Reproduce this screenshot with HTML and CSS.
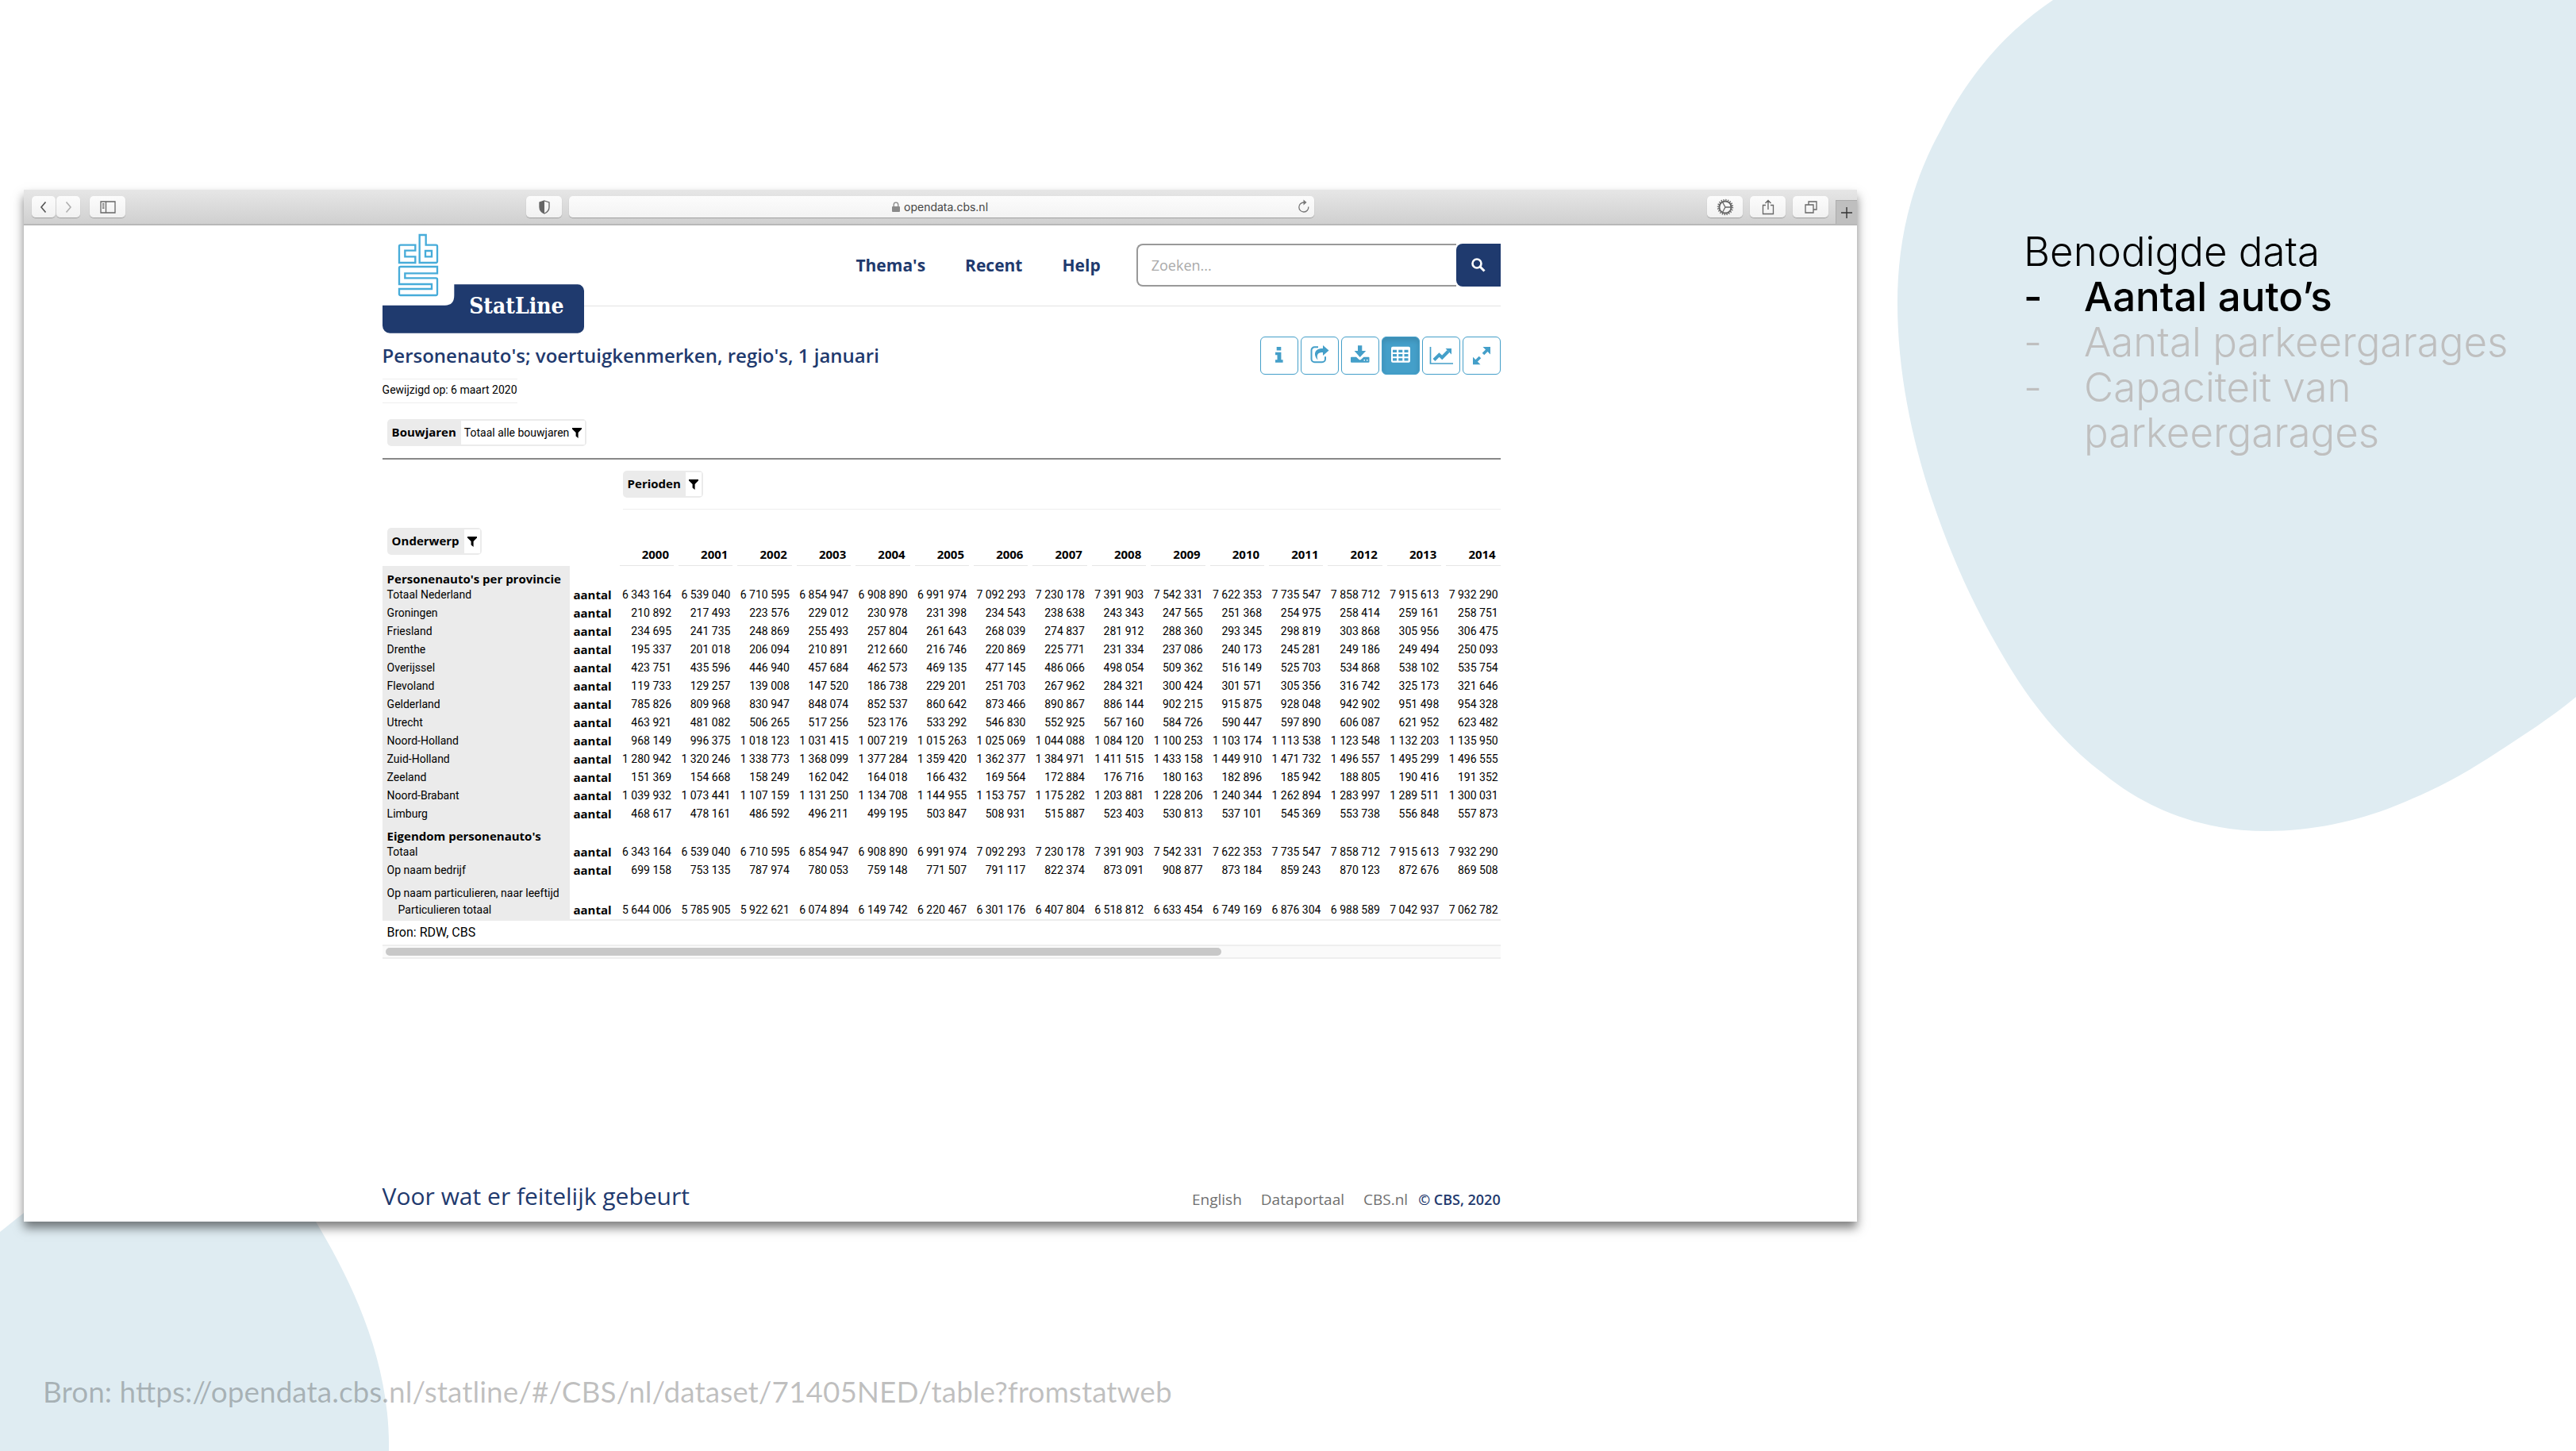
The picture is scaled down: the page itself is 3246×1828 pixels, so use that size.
FILE: index.html
```html
<!DOCTYPE html>
<html lang="nl">
<head>
<meta charset="utf-8">
<meta name="viewport" content="width=device-width, initial-scale=1">
<title>Benodigde data</title>
<link rel="stylesheet" href="styles.css">
</head>
<body>
<div class="slide">
  <svg class="blob blob-right" viewBox="0 0 856 1050" aria-hidden="true"><path d="M197 0C134 42 88 100 57 161C15 236 1 310 1 382C1 460 16 545 45 631C70 705 100 770 139 835C175 895 215 940 261 975C320 1023 390 1047 466 1047C530 1047 590 1032 641 1010C685 992 720 972 758 947C790 926 822 906 856 878V0Z"/></svg>
  <svg class="blob blob-left" viewBox="0 0 492 328" aria-hidden="true"><path d="M0 52C10 44 20 36 30 28C100 -10 320 -20 390 25L398 39C440 110 492 210 490 328H0Z"/></svg>

  <div class="stage">
    <section class="browser" aria-label="Browservenster">
      <div class="chrome">
        <div class="chrome-left">
          <div class="pair">
            <button class="key narrow" aria-label="Vorige"><svg width="16" height="18" viewBox="0 0 16 18"><path d="M10.500 2.500L5 9l5.500 6.500" fill="none" stroke="#555" stroke-width="1.600"/></svg></button>
            <button class="key narrow" aria-label="Volgende"><svg width="16" height="18" viewBox="0 0 16 18"><path d="M5.500 2.500L11 9l-5.500 6.500" fill="none" stroke="#b0b0b0" stroke-width="1.600"/></svg></button>
          </div>
          <button class="key" aria-label="Zijbalk"><svg width="20" height="16" viewBox="0 0 20 16"><path d="M1 1h18v14H1zM7.500 1v14M3 4h2.500M3 6.500h2.500M3 9h2.500" fill="none" stroke="#666" stroke-width="1.300"/></svg></button>
        </div>
        <div class="chrome-mid">
          <button class="key" aria-label="Privacyrapport"><svg width="16" height="18" viewBox="0 0 16 18"><path d="M8 1l6 2v6c0 4-2.500 6.500-6 8c-3.500-1.500-6-4-6-8V3z" fill="none" stroke="#666" stroke-width="1.300"/><path d="M8 1L2 3v6c0 4 2.500 6.500 6 8z" fill="#666"/></svg></button>
          <div class="address">
            <svg width="10" height="14" viewBox="0 0 10 14"><rect y="6" width="10" height="7" rx="1" fill="#8a8a8a"/><path d="M2.200 6V4a2.800 2.800 0 0 1 5.600 0v2" fill="none" stroke="#8a8a8a" stroke-width="1.300"/></svg>
            <input class="address-text" type="text" value="opendata.cbs.nl" aria-label="Adres">
            <button class="reload" aria-label="Vernieuwen"><svg width="16" height="18" viewBox="0 0 16 18"><path d="M13.800 9.500A6 6 0 1 1 8 4" fill="none" stroke="#777" stroke-width="1.300"/><path d="M7.500 .5L11.500 4L7.500 7.500z" fill="#777"/></svg></button>
          </div>
        </div>
        <div class="chrome-right">
          <button class="key" aria-label="Instellingen"><svg width="22" height="22" viewBox="0 0 22 22" fill="none" stroke="#666"><circle cx="11" cy="11" r="9.200" stroke-width="2" stroke-dasharray="1.300 1.590"/><circle cx="11" cy="11" r="7.600" stroke-width="2"/><path d="M11 11h7.500M11 11L7.500 4.500M11 11L7.500 17.500" stroke-width="1.300"/></svg></button>
          <button class="key" aria-label="Delen"><svg width="16" height="20" viewBox="0 0 16 20" fill="none" stroke="#666" stroke-width="1.300"><path d="M5 7.500H1.500v11h13v-11H11M8 13V1.500M4.500 5L8 1.500L11.500 5"/></svg></button>
          <button class="key" aria-label="Tabbladen"><svg width="16" height="16" viewBox="0 0 16 16" fill="none" stroke="#666" stroke-width="1.300"><path d="M1 5h10v10H1zM5 5V1h10v10h-4"/></svg></button>
          <button class="new-tab" aria-label="Nieuw tabblad"><svg width="14" height="14" viewBox="0 0 14 14"><path d="M7 0v14M0 7h14" stroke="#333" stroke-width="1.400"/></svg></button>
        </div>
      </div>

      <div class="site">
        <header class="site-head">
          <a class="brand" href="#" aria-label="CBS StatLine">
            <svg class="brand-mark" width="254" height="126" viewBox="36 42 762 378">
              <path fill="#1f3a6e" d="M307 235H774a24 24 0 0 1 24 24V395a24 24 0 0 1-24 24H64a28 28 0 0 1-28-28V314H272q35 0 35-38z"/>
              <g fill="none" stroke="#47acd9" stroke-width="7"><path d="M160 86H104q-5 0-5 5V153H160V130H121V107H160z"/><path d="M176 48H200V86H238q5 0 5 5V148q0 5-5 5H176z"/><path d="M198 108H222V130H198z"/><path d="M104 168H243V193H121V211H238q5 0 5 5V271q0 5-5 5H104q-5 0-5-5V252H222V234H99V173q0-5 5-5z"/></g>
            </svg>
            <span class="brand-name">StatLine</span>
          </a>
          <nav class="nav"><a href="#">Thema's</a><a href="#">Recent</a><a href="#">Help</a></nav>
          <form class="search">
            <input class="search-box" type="search" placeholder="Zoeken..." aria-label="Zoeken">
            <button class="search-go" type="button" aria-label="Zoek"><svg width="20" height="20" viewBox="0 0 20 20"><circle cx="8" cy="8" r="5.500" fill="none" stroke="#fff" stroke-width="2.600"/><path d="M12 12l5.500 5.500" stroke="#fff" stroke-width="3"/></svg></button>
          </form>
        </header>

        <div class="title-row">
          <h1 class="title">Personenauto's; voertuigkenmerken, regio's, 1 januari</h1>
          <div class="tools">
            <button class="tool" aria-label="Informatie"><svg viewBox="0 0 48 48"><path d="M20.700 13h5.600v4.600h-5.600zM19 19.700h7.400v9.500h2.200v3.500H19v-3.500h2.500v-6H19z"/></svg></button>
            <button class="tool" aria-label="Delen"><svg viewBox="0 0 48 48"><path d="M22 13.300h-4.500a4 4 0 0 0-4 4v11a4 4 0 0 0 4 4h9.500a4 4 0 0 0 4-4v-3" fill="none" stroke="#449fc9" stroke-width="2"/><path d="M28 11l7.500 6.500l-7.500 6.500v-4c-6 0-8.500 2-6.500 9.500c-6-6.500-4.500-14.500 6.500-14.500z"/></svg></button>
            <button class="tool" aria-label="Downloaden"><svg viewBox="0 0 48 48"><path d="M21 11.300h5.300V18h4.900L23.700 26L16.600 18H21z"/><path fill-rule="evenodd" d="M13 25.700h6l3.500 3.400q1.200.9 2.400 0l3.500-3.400H34.500q1 0 1 1V31.700q0 1-1 1H13q-1 0-1-1v-5q0-1 1-1zM28.500 29v1.500H30V29zM32 29v1.500h1.500V29z"/></svg></button>
            <button class="tool active" aria-label="Tabel" aria-pressed="true"><svg viewBox="0 0 48 48"><path fill-rule="evenodd" d="M14 12.700h20q2 0 2 2v16q0 2-2 2H14q-2 0-2-2v-16q0-2 2-2zM14 16.700v3.200h5v-3.200zM21.300 16.700v3.200h5v-3.200zM28.500 16.700v3.200h5v-3.200zM14 22v3.200h5V22zM21.300 22v3.200h5V22zM28.500 22v3.200h5V22zM14 27.300v3.200h5v-3.200zM21.300 27.300v3.200h5v-3.200zM28.500 27.300v3.200h5v-3.200z"/></svg></button>
            <button class="tool" aria-label="Grafiek"><svg viewBox="0 0 48 48"><path d="M10.500 13v21h28.500" fill="none" stroke="#449fc9" stroke-width="1.700"/><path d="M15 29.500l6.500-6.500l3.700 3.500L33 18.500" fill="none" stroke="#449fc9" stroke-width="4"/><path d="M29.500 15h7.500v7.500z"/></svg></button>
            <button class="tool" aria-label="Volledig scherm"><svg viewBox="0 0 48 48"><path d="M25.500 13H35v9.500zM13 35.300V25.800l9.500 9.500z"/><path d="M31 17l-5 5M22 26l-5 5" fill="none" stroke="#449fc9" stroke-width="3.600"/></svg></button>
          </div>
        </div>
        <p class="changed">Gewijzigd op: 6 maart 2020</p>

        <div class="filters">
          <button class="facet"><b>Bouwjaren</b><span class="value">Totaal alle bouwjaren <svg width="12" height="13" viewBox="0 0 12 13"><path d="M0 0h12v1.500L7.600 6v7L4.600 10.500V6L0 1.500z"/></svg></span></button>
        </div>

        <table class="data">
          <colgroup><col class="c-label"><col class="c-unit"><col span="15"></colgroup>
          <thead>
            <tr class="facet-row"><td colspan="2"></td><td colspan="15"><div><button class="facet"><b>Perioden</b><span><svg width="12" height="13" viewBox="0 0 12 13"><path d="M0 0h12v1.500L7.600 6v7L4.600 10.500V6L0 1.500z"/></svg></span></button></div></td></tr>
            <tr class="years"><td colspan="2"><button class="facet"><b>Onderwerp</b><span><svg width="12" height="13" viewBox="0 0 12 13"><path d="M0 0h12v1.500L7.600 6v7L4.600 10.500V6L0 1.500z"/></svg></span></button></td><th><i>2000</i><th><i>2001</i><th><i>2002</i><th><i>2003</i><th><i>2004</i><th><i>2005</i><th><i>2006</i><th><i>2007</i><th><i>2008</i><th><i>2009</i><th><i>2010</i><th><i>2011</i><th><i>2012</i><th><i>2013</i><th><i>2014</i></tr>
          </thead>
          <tbody>
            <tr class="group"><th>Personenauto's per provincie<td colspan="16"></tr>
            <tr><th>Totaal Nederland<td>aantal<td>6 343 164<td>6 539 040<td>6 710 595<td>6 854 947<td>6 908 890<td>6 991 974<td>7 092 293<td>7 230 178<td>7 391 903<td>7 542 331<td>7 622 353<td>7 735 547<td>7 858 712<td>7 915 613<td>7 932 290</tr>
            <tr><th>Groningen<td>aantal<td>210 892<td>217 493<td>223 576<td>229 012<td>230 978<td>231 398<td>234 543<td>238 638<td>243 343<td>247 565<td>251 368<td>254 975<td>258 414<td>259 161<td>258 751</tr>
            <tr><th>Friesland<td>aantal<td>234 695<td>241 735<td>248 869<td>255 493<td>257 804<td>261 643<td>268 039<td>274 837<td>281 912<td>288 360<td>293 345<td>298 819<td>303 868<td>305 956<td>306 475</tr>
            <tr><th>Drenthe<td>aantal<td>195 337<td>201 018<td>206 094<td>210 891<td>212 660<td>216 746<td>220 869<td>225 771<td>231 334<td>237 086<td>240 173<td>245 281<td>249 186<td>249 494<td>250 093</tr>
            <tr><th>Overijssel<td>aantal<td>423 751<td>435 596<td>446 940<td>457 684<td>462 573<td>469 135<td>477 145<td>486 066<td>498 054<td>509 362<td>516 149<td>525 703<td>534 868<td>538 102<td>535 754</tr>
            <tr><th>Flevoland<td>aantal<td>119 733<td>129 257<td>139 008<td>147 520<td>186 738<td>229 201<td>251 703<td>267 962<td>284 321<td>300 424<td>301 571<td>305 356<td>316 742<td>325 173<td>321 646</tr>
            <tr><th>Gelderland<td>aantal<td>785 826<td>809 968<td>830 947<td>848 074<td>852 537<td>860 642<td>873 466<td>890 867<td>886 144<td>902 215<td>915 875<td>928 048<td>942 902<td>951 498<td>954 328</tr>
            <tr><th>Utrecht<td>aantal<td>463 921<td>481 082<td>506 265<td>517 256<td>523 176<td>533 292<td>546 830<td>552 925<td>567 160<td>584 726<td>590 447<td>597 890<td>606 087<td>621 952<td>623 482</tr>
            <tr><th>Noord-Holland<td>aantal<td>968 149<td>996 375<td>1 018 123<td>1 031 415<td>1 007 219<td>1 015 263<td>1 025 069<td>1 044 088<td>1 084 120<td>1 100 253<td>1 103 174<td>1 113 538<td>1 123 548<td>1 132 203<td>1 135 950</tr>
            <tr><th>Zuid-Holland<td>aantal<td>1 280 942<td>1 320 246<td>1 338 773<td>1 368 099<td>1 377 284<td>1 359 420<td>1 362 377<td>1 384 971<td>1 411 515<td>1 433 158<td>1 449 910<td>1 471 732<td>1 496 557<td>1 495 299<td>1 496 555</tr>
            <tr><th>Zeeland<td>aantal<td>151 369<td>154 668<td>158 249<td>162 042<td>164 018<td>166 432<td>169 564<td>172 884<td>176 716<td>180 163<td>182 896<td>185 942<td>188 805<td>190 416<td>191 352</tr>
            <tr><th>Noord-Brabant<td>aantal<td>1 039 932<td>1 073 441<td>1 107 159<td>1 131 250<td>1 134 708<td>1 144 955<td>1 153 757<td>1 175 282<td>1 203 881<td>1 228 206<td>1 240 344<td>1 262 894<td>1 283 997<td>1 289 511<td>1 300 031</tr>
            <tr><th>Limburg<td>aantal<td>468 617<td>478 161<td>486 592<td>496 211<td>499 195<td>503 847<td>508 931<td>515 887<td>523 403<td>530 813<td>537 101<td>545 369<td>553 738<td>556 848<td>557 873</tr>
            <tr class="group"><th>Eigendom personenauto's<td colspan="16"></tr>
            <tr><th>Totaal<td>aantal<td>6 343 164<td>6 539 040<td>6 710 595<td>6 854 947<td>6 908 890<td>6 991 974<td>7 092 293<td>7 230 178<td>7 391 903<td>7 542 331<td>7 622 353<td>7 735 547<td>7 858 712<td>7 915 613<td>7 932 290</tr>
            <tr><th>Op naam bedrijf<td>aantal<td>699 158<td>753 135<td>787 974<td>780 053<td>759 148<td>771 507<td>791 117<td>822 374<td>873 091<td>908 877<td>873 184<td>859 243<td>870 123<td>872 676<td>869 508</tr>
            <tr class="group light"><th>Op naam particulieren, naar leeftijd<td colspan="16"></tr>
            <tr class="sub"><th>Particulieren totaal<td>aantal<td>5 644 006<td>5 785 905<td>5 922 621<td>6 074 894<td>6 149 742<td>6 220 467<td>6 301 176<td>6 407 804<td>6 518 812<td>6 633 454<td>6 749 169<td>6 876 304<td>6 988 589<td>7 042 937<td>7 062 782</tr>
          </tbody>
          <tfoot><tr><td colspan="17">Bron: RDW, CBS</td></tr></tfoot>
        </table>
        <div class="scroll"><div class="thumb"></div></div>

        <footer class="site-foot">
          <p class="slogan">Voor wat er feitelijk gebeurt</p>
          <nav class="foot-nav"><a href="#">English</a><a href="#">Dataportaal</a><a href="#">CBS.nl</a></nav>
          <p class="copyright">© CBS, 2020</p>
        </footer>
      </div>
    </section>

    <aside class="notes">
      <h2>Benodigde data</h2>
      <ul>
        <li class="current">Aantal auto’s</li>
        <li>Aantal parkeergarages</li>
        <li>Capaciteit van parkeergarages</li>
      </ul>
    </aside>
  </div>

  <p class="source">Bron: https://opendata.cbs.nl/statline/#/CBS/nl/dataset/71405NED/table?fromstatweb</p>
</div>
</body>
</html>
```

FILE: styles.css
```css
* { box-sizing: border-box; }
body { margin: 0; background: #fff; color: #000; }
h1, h2, p, ul { margin: 0; padding: 0; font-size: inherit; font-weight: inherit; }
ul { list-style: none; }
a { color: inherit; text-decoration: none; }
button, input { font: inherit; color: inherit; margin: 0; padding: 0; border: 0; background: none; }
svg { display: block; flex: none; }

.slide {
  position: relative;
  display: flex;
  flex-direction: column;
  min-height: 100vh;
  padding: 239px 0 47px 30px;
  overflow: hidden;
}
.blob { position: absolute; fill: #dfecf2; }
.blob-right { top: 0; right: 0; width: 856px; }
.blob-left { bottom: 0; left: 0; width: 492px; }

.stage { position: relative; display: grid; grid-template-columns: 2310fr 906fr; }

/* Browser window */
.browser {
  display: flex;
  flex-direction: column;
  min-width: 0;
  min-height: 71.1vh;
  background: #fff;
  box-shadow: 0 8px 12px rgba(0, 0, 0, .5);
}
.chrome {
  display: grid;
  grid-template-columns: 633fr 993fr 684fr;
  height: 45px;
  border-bottom: 2px solid #b8b8b8;
  background: linear-gradient(#e6e6e6, #d0d0d0);
}
.chrome-left, .chrome-mid, .chrome-right { display: flex; padding-top: 8px; min-width: 0; }
.chrome-left { gap: 12px; padding-left: 10px; }
.chrome-mid { gap: 9px; }
.chrome-right { gap: 9px; justify-content: flex-end; }
.pair { display: flex; gap: 1px; }
.key {
  display: flex;
  align-items: center;
  justify-content: center;
  width: 45px;
  height: 27px;
  border-radius: 5px;
  background: linear-gradient(#fcfcfc, #f1f1f1);
  box-shadow: 0 1px 1px rgba(0, 0, 0, .25);
}
.key.narrow { width: 30px; }
.address {
  flex: 1;
  display: flex;
  align-items: center;
  justify-content: center;
  gap: 5px;
  height: 27px;
  position: relative;
  border-radius: 5px;
  background: linear-gradient(#fcfcfc, #f3f3f3);
  box-shadow: 0 1px 1px rgba(0, 0, 0, .25);
}
.address-text { width: 110px; font: 14px/20px Inter, sans-serif; color: #444; }
.reload { position: absolute; right: 5px; top: 4px; }
.new-tab {
  display: flex;
  align-items: center;
  justify-content: center;
  width: 27px;
  height: 30px;
  margin-top: 5px;
  border: 1px solid #adadad;
  border-width: 1px 0 0 1px;
  background: #bfbfbf;
}

/* Website */
.site {
  flex: 1;
  display: flex;
  flex-direction: column;
  width: 61%;
  margin-left: 19.55%;
  font: 15px/17px "Open Sans", "Noto Sans", sans-serif;
}
.site-head {
  position: relative;
  display: flex;
  align-items: center;
  justify-content: flex-end;
  gap: 45px;
  padding: 23px 0 24px;
  border-bottom: 1px solid #e3e3e3;
}
.brand { position: absolute; left: 0; top: 10px; }
.brand-name {
  position: absolute;
  right: 25px;
  bottom: 18px;
  color: #fff;
  font: bold 28px/32px "DejaVu Serif Condensed", "DejaVu Serif", serif;
}
.nav { display: flex; gap: 50px; font-size: 21px; line-height: 28px; font-weight: 700; color: #1f3a6e; }
.search { display: flex; width: 459px; height: 54px; }
.search-box {
  flex: 1;
  min-width: 0;
  padding-left: 17px;
  border: 2px solid #999;
  border-right: 0;
  border-radius: 8px 0 0 8px;
  font-size: 18px;
}
.search-box::placeholder { color: #aaa; opacity: 1; }
.search-go {
  display: flex;
  align-items: center;
  justify-content: center;
  width: 56px;
  border-radius: 8px 0 0 8px;
  background: #1f3a6e;
}

.title-row { display: flex; align-items: center; justify-content: space-between; padding-top: 38px; }
.title { font-size: 24px; line-height: 30px; font-weight: 600; color: #1f3a6e; }
.tools { display: flex; gap: 3px; }
.tool { width: 48px; height: 48px; border: 1px solid #449fc9; border-radius: 6px; fill: #449fc9; }
.tool svg { margin: -1px; width: 48px; height: 48px; }
.tool.active { background: #449fc9; fill: #fff; box-shadow: inset 0 4px 6px rgba(0, 0, 0, .12); }

.changed {
  align-self: flex-start;
  margin-top: 5px;
  padding: 5px 0 7px;
  border: 1px solid #eee;
  border-width: 1px 0;
  font: 14px/17px Roboto, sans-serif;
}
.filters { display: flex; padding: 20px 0 15px 6px; border-bottom: 2px solid #888; }
.facet {
  display: flex;
  align-items: stretch;
  height: 34px;
  padding: 2px 2px 2px 6px;
  border-radius: 5px;
  background: #ebebeb;
}
.facet b { padding-right: 6px; line-height: 28px; }
.facet span {
  display: flex;
  align-items: center;
  gap: 4px;
  padding: 0 4px;
  background: #fff;
  font-family: Roboto, sans-serif;
}
.facet .value { font-size: 14px; }

/* Data table */
.data { width: 100%; table-layout: fixed; border-collapse: collapse; }
.data th, .data td { padding: 0; white-space: nowrap; }
.c-label { width: 236px; }
.c-unit { width: 57px; }
.facet-row div { display: flex; margin-left: 10px; padding: 14px 0; border-bottom: 1px solid #eee; }
.years td { padding: 23px 0 14px 6px; }
.years th { padding: 0 0 0 6px; vertical-align: bottom; text-align: right; font-weight: 700; }
.years i { display: block; padding: 0 6px 5px 0; border-bottom: 1px solid #e6e6e6; font-style: normal; }
.data tbody tr { height: 23px; }
.data tbody td { padding-right: 3px; text-align: right; font-family: Roboto, sans-serif; font-size: 14px; }
.data tbody th { padding-left: 6px; background: #ebebeb; text-align: left; font-family: Roboto, sans-serif; font-size: 14px; font-weight: 400; }
.data tbody th + td { padding-right: 4px; font-family: "Open Sans", "Noto Sans", sans-serif; font-size: 15px; font-weight: 700; }
.data tbody .group th { height: 25px; padding-top: 8px; font-family: "Open Sans", "Noto Sans", sans-serif; font-size: 15px; font-weight: 700; }
.data tbody .group.light th { height: 26px; font-family: Roboto, sans-serif; font-size: 14px; font-weight: 400; }
.data tbody .sub th { padding-left: 20px; }
.data tbody .sub { height: 25px; }
.data tfoot td {
  padding: 5px 0 5px 6px;
  border: 2px solid #ececec;
  border-width: 2px 0 0;
  font: 16px/20px Roboto, sans-serif;
}
.scroll { padding: 2px 0 2px 4px; border: 2px solid #eee; border-width: 2px 0; background: #fafafa; }
.thumb { width: 75%; height: 10px; border-radius: 5px; background: #c8c8c8; }

.site-foot { display: flex; align-items: baseline; margin-top: auto; padding-bottom: 8px; line-height: 40px; font-size: 19px; }
.slogan { margin-right: auto; font-size: 30px; color: #1f3a6e; }
.foot-nav { display: flex; gap: 24px; color: #707070; }
.copyright { margin-left: 13px; font-size: 18px; font-weight: 600; color: #1f3a6e; }

/* Notes */
.notes { padding: 49px 40px 0 210px; font: 300 51px/57px Inter, sans-serif; }
.notes li { position: relative; padding-left: 76px; color: #bfbfbf; }
.notes li::before { content: "-"; position: absolute; left: 0; }
.notes .current { color: #000; font-weight: 500; }

.source {
  position: relative;
  margin-top: auto;
  padding-left: 24px;
  font: 37px/56px Lato, sans-serif;
  color: rgba(0, 0, 0, .25);
}
```
